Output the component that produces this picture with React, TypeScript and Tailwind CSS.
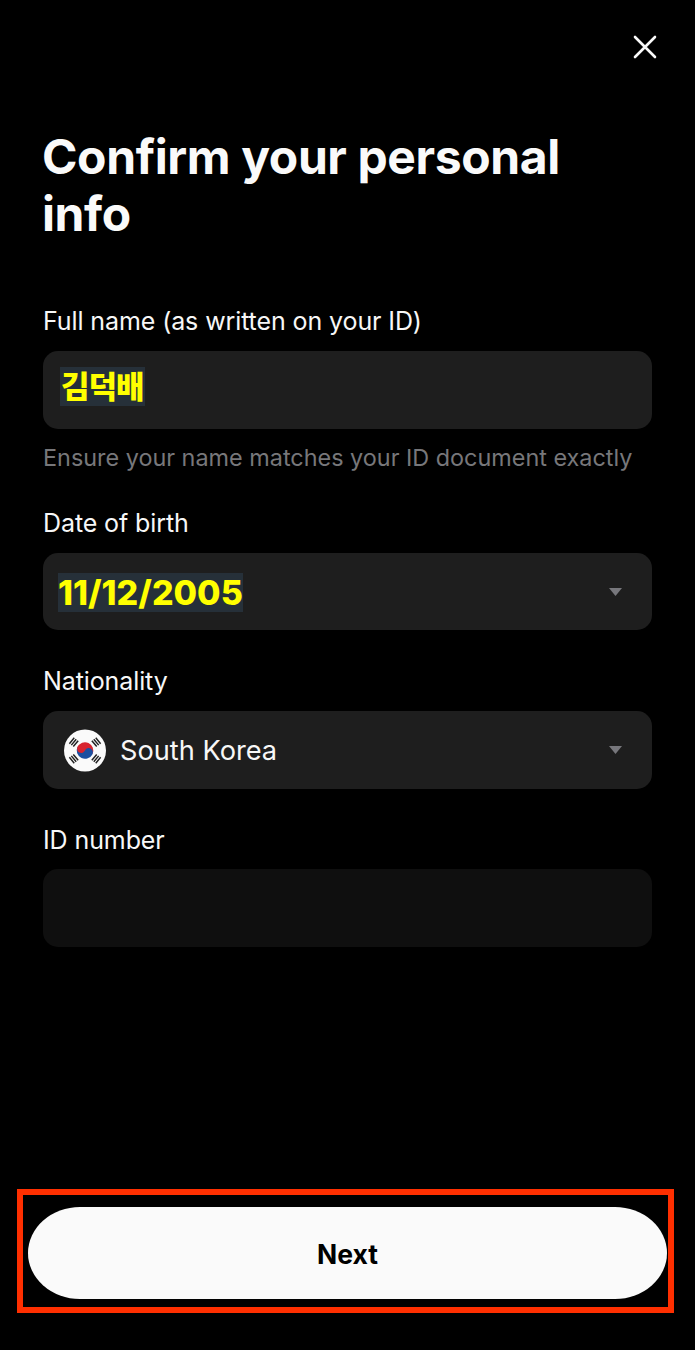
import React from 'react'

const FONT = 'font-["Inter","Noto_Sans_CJK_KR",sans-serif]'

const Label: React.FC<{ children: React.ReactNode }> = ({ children }) => (
  <div className="h-[24px] text-[25px] leading-[24px] text-[#f7f7f7] tracking-[-0.1px]">{children}</div>
)

const Caret = () => (
  <svg width="13" height="8" viewBox="0 0 13 8" className="ml-auto mr-[30px]">
    <path d="M0 0 H13 L6.5 8 Z" fill="#77777c" />
  </svg>
)

// flag is a drawing, so it stays inline svg
const KoreaFlag = () => (
  <svg width="42" height="43" viewBox="0 0 43 43" className="shrink-0">
    <circle cx="21.5" cy="21.5" r="21.5" fill="#fafafa" />
    <g transform="rotate(25 21.5 21.5)">
      <path d="M13 21.5a8.500 8.500 0 0 1 17 0z" fill="#d8242f" />
      <path d="M13 21.5a8.500 8.500 0 0 0 17 0z" fill="#1c4fa0" />
      <circle cx="17.25" cy="21.500" r="4.25" fill="#d8242f" />
      <circle cx="25.75" cy="21.500" r="4.25" fill="#1c4fa0" />
    </g>
    <g stroke="#222" strokeWidth="1.5">
      <path d="M5.5 14.5l5-6M7.5 16l5-6M9.500 17.5l5-6" />
      <path d="M28.5 11.5l5 6M30.5 10l5 6M32.5 8.5l5 6" />
      <path d="M5.5 28.5l5 6M7.5 27l5 6M9.500 25.5l5 6" />
      <path d="M28.5 31.5l5-6M30.5 33l5-6M32.5 34.500l5-6" />
    </g>
  </svg>
)

export default function App() {
  return (
    <div className={`${FONT} flex h-[1350px] w-[695px] flex-col bg-black`}>
      <div className="flex h-[94px] items-center justify-end pr-[37px]">
        <svg width="26" height="26" viewBox="0 0 26 26" fill="none" stroke="#fafafa" strokeWidth="2.6" strokeLinecap="round">
          <path d="M3 3 L23 23 M23 3 L3 23" />
        </svg>
      </div>

      <div className="flex-1 px-[43px]">
        <h1 className="mt-[34px] -ml-px text-[48px] font-bold leading-[57px] tracking-[-0.4px] text-[#fafafa]">
          Confirm your personal info
        </h1>

        <div className="mt-[67px]">
          <Label>Full name (as written on your ID)</Label>
          <div className="mt-[18px] flex h-[78px] items-center rounded-[15px] bg-[#1e1e1e] pb-[7px] pl-[17px]">
            <span className="bg-[#263039] px-px text-[31px] font-black leading-[39px] tracking-[-1px] text-[#ffff00]">김덕배</span>
          </div>
          <p className="mt-[17px] h-[24px] text-[23.4px] leading-[24px] text-[#77777a]">
            Ensure your name matches your ID document exactly
          </p>
        </div>

        <div className="mt-[41px]">
          <Label>Date of birth</Label>
          <div className="mt-[18px] flex h-[77px] items-center rounded-[15px] bg-[#1e1e1e] pl-[15px]">
            <span className="mt-[1px] bg-[#263039] text-[34px] font-extrabold leading-[39px] text-[#ffff00]">11/12/2005</span>
            <Caret />
          </div>
        </div>

        <div className="mt-[39px]">
          <Label>Nationality</Label>
          <div className="mt-[18px] flex h-[78px] items-center rounded-[15px] bg-[#1e1e1e] pl-[21px]">
            <KoreaFlag />
            <span className="ml-[14px] pt-[3px] text-[27.2px] text-[#f7f7f7]">South Korea</span>
            <Caret />
          </div>
        </div>

        <div className="mt-[39px]">
          <Label>ID number</Label>
          <div className="mt-[17px] h-[78px] rounded-[15px] bg-[#0f0f0f]" />
        </div>
      </div>

      <div className="mb-[37px] ml-[17px] mr-[21px] border-[6px] border-[#ff2f00] pb-[8px] pl-[5px] pr-px pt-[12px]">
        <button className="flex h-[92px] w-full items-center justify-center rounded-[52px/46px] bg-[#fafafa] pt-[3px] text-[26.5px] font-bold text-black">
          Next
        </button>
      </div>
    </div>
  )
}
